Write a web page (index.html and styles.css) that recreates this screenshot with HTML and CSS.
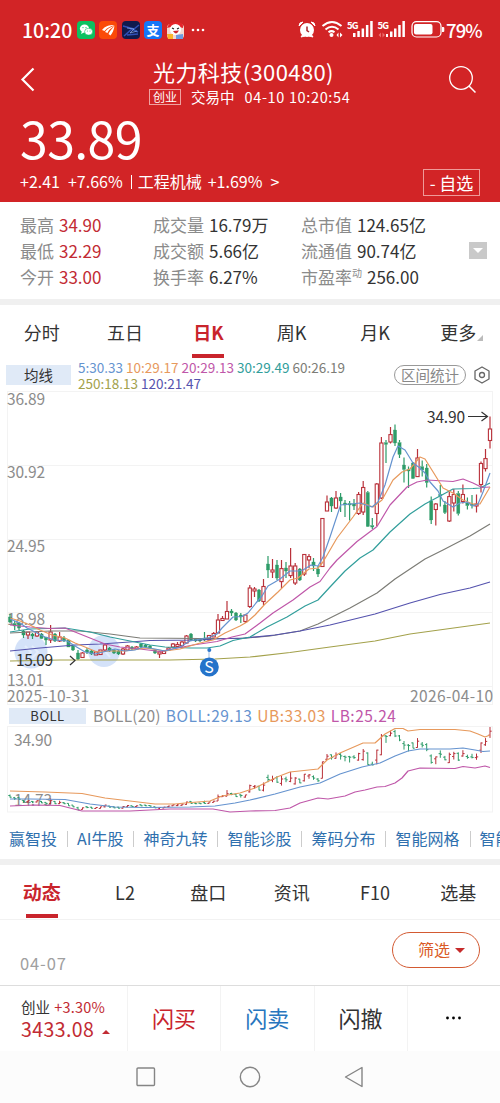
FILE: index.html
```html
<!DOCTYPE html>
<html lang="zh-CN">
<head>
    <meta charset="UTF-8">
    <meta name="viewport" content="width=device-width, initial-scale=1.0">
    <title>光力科技(300480)</title>
    <link rel="stylesheet" href="styles.css">
</head>
<body>
    <header class="header">
        <div class="status">
            <span class="clock">10:20</span>
            <svg class="apps" width="130" height="20" viewBox="0 0 130 20">
                <rect x="0" y="1" width="18" height="18" rx="4" fill="#0cc160"/>
                <ellipse cx="7.5" cy="8.5" rx="4.6" ry="3.9" fill="#fff"/>
                <path d="M4 14l1-3 3 1z" fill="#fff"/>
                <ellipse cx="11.6" cy="11.7" rx="4" ry="3.4" fill="#fff" stroke="#0cc160" stroke-width=".6"/>
                <g fill="#0cc160"><circle cx="6" cy="7.6" r=".6"/><circle cx="9" cy="7.6" r=".6"/><circle cx="10.3" cy="11" r=".5"/><circle cx="13" cy="11" r=".5"/></g>
                <rect x="22" y="1" width="18" height="18" rx="4" fill="#fb4a08"/>
                <path d="M25 10C28 6 32 5 37.500 5C34 6.500 30 7.500 27.500 11zM28 12C30 8.500 34 7 37.500 5.500C35 8 32 9 30.500 13zM31.500 14C32.500 11 35 9 37.500 6C37 9.500 35.500 13 33.500 15.500z" fill="#fff"/>
                <rect x="45" y="1" width="18" height="18" rx="4" fill="#101a4c"/>
                <path d="M46 6l11 3 5-4M47 16l8-7 6 3M50 15l11-1" stroke="#2f50b8" stroke-width="1.500" fill="none"/>
                <path d="M50 8l7 1-4 4 7-2" stroke="#8fb0f5" stroke-width=".7" fill="none"/>
                <rect x="67" y="1" width="18" height="18" rx="4" fill="#1677f8"/>
                <text x="69.500" y="14.800" font-size="13" font-weight="700" fill="#fff">支</text>
                <rect x="90" y="4" width="17" height="15" rx="4" fill="#f3d8d0"/>
                <path d="M90 8Q92 1 100 2Q107 2 106 8L98 6z" fill="#e5242a"/>
                <circle cx="98.500" cy="9.500" r="5.500" fill="#fff"/>
                <path d="M95 8l2 1M100 9l2-1" stroke="#222" stroke-width="1.200"/>
                <path d="M96 11q3 5 6-.5z" fill="#cf252b"/>
                <path d="M90 14h6v5h-5z" fill="#f9b52b"/><path d="M99 15l7-1v5h-7z" fill="#6e9be0"/>
                <g fill="#fff"><circle cx="116" cy="10" r="1.300"/><circle cx="121" cy="10" r="1.300"/><circle cx="126" cy="10" r="1.300"/></g>
            </svg>
            <svg class="signals" width="150" height="20" viewBox="298 20 150 20">
                <g fill="#fff">
                    <circle cx="307" cy="30" r="7"/>
                    <path d="M299 26q0-4 4-4zM315 26q0-4-4-4zM301 37l2-3 2 2zM313 37l-2-3-2 2z" stroke="#fff"/>
                    <circle cx="331.500" cy="35" r="2"/>
                </g>
                <path d="M307 26.500v4l2 1.500" stroke="#a9232a" stroke-width="1.500" fill="none"/>
                <path d="M322.500 26q9.500-8 19 0M325.500 29.500q6.500-5.500 13 0M328.500 32.300q3-2.300 6 0" stroke="#fff" stroke-width="2" fill="none"/>
                <path d="M338.500 32.500l-2 2.500 2 2.500zM340 32.500l2.500 2.500-2.500 2.500z" fill="#fff"/>
                <g fill="#fff">
                    <text x="347" y="29" font-size="9.500" font-weight="700" textLength="11.500">5G</text>
                    <path d="M353 33h2.500v4H353zM357.300 31h2.500v6h-2.500zM361.600 28.500h2.500V37h-2.500zM365.900 25h2.500v12h-2.500zM370.200 21h2.500v16h-2.500z"/>
                    <text x="377.500" y="29" font-size="9.500" font-weight="700" textLength="11.500">5G</text>
                    <path d="M386 34h2v3h-2zM390 31.500h2.500V37H390zM394 28.500h2.500V37H394zM398.200 25h2.500v12h-2.500zM402.400 21h2.500v16h-2.500z"/>
                    <path d="M381 32.500l-2.500 2.500 2.500 2.500zM382.500 32.500l2.500 2.500-2.500 2.500z" fill="#ec6c6b"/>
                    <rect x="414" y="24" width="18.500" height="10.500" rx="2"/>
                    <path d="M442 27h1.300q1 0 1 1v3q0 1-1 1H442z"/>
                </g>
                <rect x="412" y="21.700" width="29" height="15.300" rx="4.500" fill="none" stroke="#fff" stroke-width="1.200"/>
            </svg>
            <span class="percent">79%</span>
        </div>
        <div class="title-row">
            <svg class="back" width="20" height="28" viewBox="0 0 20 28"><path d="M15.500 2.500L4.500 13.500l11 11" fill="none" stroke="#fff" stroke-width="2.200"/></svg>
            <div class="title">
                <h1>光力科技<span>(300480)</span></h1>
                <p><span class="board">创业</span><span>交易中</span><span class="time">04-10 10:20:54</span></p>
            </div>
            <svg class="search" width="30" height="30" viewBox="0 0 30 30"><circle cx="13" cy="13" r="11.300" fill="none" stroke="#fff" stroke-width="1.300"/><path d="M21 21l6.500 6.500" stroke="#fff" stroke-width="1.500"/></svg>
        </div>
        <div class="price">33.89</div>
        <div class="change-row">
            <span class="delta">+2.41</span><span class="delta-pct">+7.66%</span><i></i><span>工程机械</span><span class="sector-pct">+1.69%</span><span>&gt;</span>
            <span class="watch">- 自选</span>
        </div>
    </header>

    <section class="stats">
        <dl>
            <div><dt>最高</dt><dd class="red">34.90</dd></div>
            <div><dt>最低</dt><dd class="red">32.29</dd></div>
            <div><dt>今开</dt><dd class="red">33.00</dd></div>
        </dl>
        <dl>
            <div><dt>成交量</dt><dd>16.79万</dd></div>
            <div><dt>成交额</dt><dd>5.66亿</dd></div>
            <div><dt>换手率</dt><dd>6.27%</dd></div>
        </dl>
        <dl>
            <div><dt>总市值</dt><dd>124.65亿</dd></div>
            <div><dt>流通值</dt><dd>90.74亿</dd></div>
            <div><dt>市盈率<sup>动</sup></dt><dd>256.00</dd></div>
        </dl>
        <span class="expand"></span>
    </section>

    <nav class="tabs">
        <span>分时</span><span>五日</span><span class="active">日K</span><span>周K</span><span>月K</span><span class="more">更多</span>
    </nav>

    <div class="ma-row">
        <span class="tag">均线</span>
        <p class="ma-values">
            <span class="ma5">5:30.33</span> <span class="ma10">10:29.17</span> <span class="ma20">20:29.13</span> <span class="ma30">30:29.49</span> <span class="ma60">60:26.19</span><br>
            <span class="ma250">250:18.13</span> <span class="ma120">120:21.47</span>
        </p>
        <span class="range">区间统计</span>
        <svg class="gear" width="18" height="20" viewBox="0 0 18 20"><path d="M9 2l7 4v8l-7 4-7-4V6z" fill="none" stroke="#666" stroke-width="1.300" stroke-linejoin="round"/><circle cx="9" cy="10" r="2.500" fill="none" stroke="#666" stroke-width="1.300"/></svg>
    </div>

    <svg class="chart" width="500" height="314" viewBox="0 391 500 314">
        <path class="grid" d="M7 391.500H493M7 465.500H493M7 539.500H493M7 612.500H493M7 686.500H493M7 704.500H493M7.500 391V705M492.500 391V705"/>
        <g class="axis">
            <text x="7" y="404.500" textLength="38">36.89</text>
            <text x="7" y="478" textLength="38">30.92</text>
            <text x="7" y="551.500" textLength="38">24.95</text>
            <text x="7" y="625" textLength="38">18.98</text>
            <text x="7" y="686" textLength="37">13.01</text>
            <text x="7" y="702" textLength="82">2025-10-31</text>
            <text x="410" y="702" textLength="83">2026-04-10</text>
        </g>
        <circle cx="31" cy="652" r="16.500" class="bubble"/>
        <circle cx="104" cy="651" r="16" class="bubble"/>
        <path d="M25 646l6 6-6 6M32 646l6 6-6 6M98 643l12 14" class="bubble-mark"/>
        <g id="candles"></g>
        <g id="averages"></g>
        <g class="mark">
            <text x="427" y="422.500" textLength="38">34.90</text>
            <path d="M468 416.500h19M481.500 412l6 4.500-6 4.500"/>
            <text x="16" y="666" textLength="37">15.09</text>
            <path d="M70 656l5 4.500-5 4.500"/>
        </g>
        <path d="M209 650v9" stroke="#9bbbe5"/>
        <circle cx="209.300" cy="650" r="2" fill="#2e78cb"/>
        <circle cx="209.300" cy="667" r="9.500" fill="#2473ca"/>
        <text x="204.300" y="672.800" font-size="16" fill="#fff">S</text>
    </svg>

    <div class="boll-row">
        <span class="tag">BOLL</span>
        <span class="boll-name">BOLL(20)</span><span class="ma5 boll-mid">BOLL:29.13</span><span class="ma10 boll-ub">UB:33.03</span><span class="ma20 boll-lb">LB:25.24</span>
    </div>
    <svg class="chart" width="500" height="88" viewBox="0 726 500 88">
        <path class="grid" d="M7 726.500H493M7 812H493M7.500 726V812M492.500 726V812"/>
        <g class="axis">
            <text x="14" y="745.500" textLength="38">34.90</text>
            <text x="14" y="805.500" textLength="38">14.73</text>
        </g>
        <g id="bars"></g>
        <g id="bands"></g>
    </svg>

    <div class="links">
        <a>赢智投</a><a>AI牛股</a><a>神奇九转</a><a>智能诊股</a><a>筹码分布</a><a>智能网格</a><a>智能交易</a>
    </div>

    <nav class="tabs tabs-news">
        <span class="active">动态</span><span>L2</span><span>盘口</span><span>资讯</span><span>F10</span><span>选基</span>
    </nav>
    <div class="feed">
        <span class="date">04-07</span>
        <span class="filter">筛选<i></i></span>
    </div>

    <footer class="trade">
        <div class="index">
            <p>创业 <span>+3.30%</span></p>
            <b>3433.08<i></i></b>
        </div>
        <span class="buy">闪买</span><span class="sell">闪卖</span><span>闪撤</span>
        <span><svg width="18" height="4" viewBox="0 0 18 4"><circle cx="2.500" cy="2" r="1.400"/><circle cx="8.500" cy="2" r="1.400"/><circle cx="14.500" cy="2" r="1.400"/></svg></span>
    </footer>
    <div class="system">
        <svg width="22" height="22" viewBox="0 0 22 22"><rect x="2" y="2" width="17.500" height="17.500" rx="1"/></svg>
        <svg width="22" height="22" viewBox="0 0 22 22"><circle cx="11" cy="11" r="9.700"/></svg>
        <svg width="22" height="22" viewBox="0 0 22 22"><path d="M19 1.500v19L2.500 11z" stroke-linejoin="round"/></svg>
    </div>
    <script src="chart.js"></script>
</body>
</html>
```
FILE: styles.css
```css
* {
    box-sizing: border-box;
}
body {
    margin: 0;
    width: 500px;
    height: 1103px;
    overflow: hidden;
    background: #fff;
    color: #333;
    font-family: "Noto Sans CJK SC", sans-serif;
    font-size: 17px;
    line-height: 1.2;
}
h1, p, dl, dd {
    margin: 0;
    font-weight: 400;
}
svg {
    display: block;
    flex: none;
    overflow: visible;
}
i {
    display: inline-block;
}
.header {
    height: 202px;
    background: #d22426;
    color: #fff;
}
.status {
    display: flex;
    align-items: center;
    height: 60px;
    padding-left: 22px;
    font-weight: 500;
}
.clock {
    width: 55px;
    font-size: 19.5px;
}
.signals {
    margin-left: 91px;
}
.percent {
    margin-left: -2px;
    font-size: 18.5px;
    letter-spacing: -0.9px;
}
.title-row {
    display: flex;
    align-items: center;
    height: 50px;
    padding: 0 22px 0 18px;
}
.back {
    margin-top: -11px;
}
.search {
    margin-top: -11px;
}
.title {
    flex: 1;
    padding-left: 1px;
    text-align: center;
}
.title h1 {
    margin-top: -5px;
    font-size: 22px;
    line-height: 28px;
    letter-spacing: 0.4px;
}
.title p {
    display: flex;
    align-items: center;
    gap: 10px;
    height: 24px;
    padding-left: 110px;
    font-size: 14.5px;
}
.board {
    padding: 0 3px;
    border: 1px solid #efa2a0;
    font-size: 12px;
    line-height: 14px;
}
.time {
    letter-spacing: 0.65px;
}
.price {
    height: 60px;
    padding: 1px 0 0 20px;
    font-size: 50px;
    line-height: 52px;
    letter-spacing: -0.6px;
}
.change-row {
    display: flex;
    align-items: center;
    height: 26px;
    margin-top: -1px;
    padding: 0 20px;
    font-size: 16px;
}
.delta-pct {
    margin-left: 8px;
}
.change-row i {
    width: 1px;
    height: 14px;
    margin: 0 6px 0 8px;
    background: #fff;
}
.sector-pct {
    margin: 0 8px 0 6px;
}
.watch {
    width: 57px;
    height: 27px;
    margin-left: auto;
    border: 1px solid #ef9a98;
    font-size: 17px;
    line-height: 26px;
    text-align: center;
}
.stats {
    display: flex;
    align-items: center;
    height: 97px;
    padding-left: 20px;
}
.stats dl {
    width: 133px;
}
.stats dl + dl {
    width: 148px;
}
.stats dl:nth-child(3) {
    width: 168px;
}
.stats dl div {
    display: flex;
    height: 26px;
    line-height: 26px;
}
dt {
    margin-right: 5px;
    color: #8b8b8b;
}
sup {
    font-size: 10px;
    line-height: 0;
}
.red {
    color: #c22b33;
}
.expand {
    display: flex;
    width: 18px;
    height: 17px;
    background: #c9c9c9;
    justify-content: center;
    align-items: center;
}
.expand::after {
    content: "";
    border: 5px solid transparent;
    border-top-color: #fff;
    border-bottom: 0;
}
.tabs {
    display: flex;
    height: 61px;
    border-top: 6px solid #f0f0f0;
    font-size: 18px;
}
.tabs span {
    display: flex;
    flex: 1;
    flex-direction: column;
    align-items: center;
    line-height: 54px;
}
.tabs .active {
    color: #c9242c;
    font-weight: 700;
}
.tabs .active::after {
    content: "";
    width: 32px;
    height: 4px;
    margin-top: -5px;
    background: #c9242c;
}
.tabs-news .active {
    font-size: 19px;
}
.more {
    position: relative;
}
.more::after {
    content: "";
    position: absolute;
    right: 17px;
    top: 30px;
    border: 3px solid #bbb;
    border-top-color: transparent;
    border-left-color: transparent;
}
.ma-row {
    display: flex;
    height: 37px;
    margin-top: -6px;
    padding: 6px 9px 0 6px;
}
.tag {
    width: 65px;
    height: 20px;
    background: #e0eaf7;
    font-size: 14.5px;
    line-height: 20px;
    text-align: center;
}
.ma-row .tag {
    margin-top: 5px;
}
.ma-values {
    width: 316px;
    margin-left: 7px;
    font-size: 13.5px;
    line-height: 15.5px;
    white-space: nowrap;
}
.ma5 { color: #6593cf; }
.ma10 { color: #e7995c; }
.ma20 { color: #bf57a9; }
.ma30 { color: #319e9b; }
.ma60 { color: #7c7c76; }
.ma250 { color: #a3a14b; }
.ma120 { color: #5553ae; }
.range {
    width: 72px;
    height: 20px;
    margin: 5px 7px 0 0;
    border: 1px solid #999;
    border-radius: 10px;
    color: #888;
    font-size: 14.5px;
    line-height: 18px;
    text-align: center;
}
.gear {
    margin-top: 5px;
}
.grid {
    fill: none;
    stroke: #f3f3f3;
}
.axis {
    fill: #8c8c8c;
    font-size: 15.5px;
}
.mark {
    fill: #333;
    font-size: 15.5px;
}
.mark path {
    fill: none;
    stroke: #333;
    stroke-width: 1.2;
}
.bubble {
    fill: #c9dbf8;
    opacity: 0.8;
}
.bubble-mark {
    fill: none;
    stroke: #e4edfc;
    stroke-width: 2;
}
.line {
    fill: none;
    stroke-width: 1.2;
    stroke-linejoin: round;
}
.boll-row {
    display: flex;
    align-items: center;
    height: 21px;
    padding-left: 9px;
    font-size: 15.5px;
    letter-spacing: 0.5px;
}
.boll-row .tag {
    width: 77px;
    height: 16px;
    font-size: 13px;
    line-height: 16px;
}
.boll-name {
    margin: 0 5px 0 7px;
    color: #8c8c8c;
    letter-spacing: 0.2px;
}
.boll-mid, .boll-ub {
    margin-right: 5px;
}
.links {
    display: flex;
    align-items: center;
    height: 45px;
    padding-left: 9px;
    padding-top: 5px;
    overflow: hidden;
    color: #2f70ae;
    font-size: 16px;
}
.links a {
    white-space: nowrap;
}
.links a + a::before {
    content: "";
    display: inline-block;
    width: 1px;
    height: 16px;
    margin: 0 9px 0 10px;
    background: #ccc;
    vertical-align: -2px;
}
.tabs-news {
    border-bottom: 1px solid #f2f2f2;
}
.feed {
    display: flex;
    justify-content: space-between;
    height: 65px;
    padding: 12px 20px 0;
}
.date {
    padding-top: 22px;
    color: #a0a0a0;
    font-size: 16.5px;
    letter-spacing: 0.9px;
}
.filter {
    width: 88px;
    height: 36px;
    padding-left: 25px;
    border: 1px solid #d35a32;
    border-radius: 18px;
    color: #da5a26;
    font-size: 16px;
    line-height: 33px;
}
.filter i {
    margin-left: 5px;
    border: 5px solid transparent;
    border-top-color: #c62b2b;
    border-bottom: 0;
    vertical-align: 3px;
}
.trade {
    display: flex;
    height: 66px;
    border-top: 1px solid #ddd;
    font-size: 22px;
}
.trade > span {
    display: flex;
    flex: 1;
    justify-content: center;
    align-items: center;
    padding-bottom: 2px;
    border-left: 1px solid #f3f3f3;
}
.trade > .buy {
    color: #c9252d;
}
.trade > .sell {
    color: #2876be;
}
.index {
    width: 127px;
    padding: 12px 0 0 21px;
    color: #c22b33;
    font-size: 14.5px;
}
.index p {
    height: 19px;
    color: #333;
}
.index p span {
    margin-left: 1px;
    color: #c22b33;
    letter-spacing: 0.2px;
}
.index b {
    display: block;
    font-size: 19.5px;
    font-weight: 400;
    letter-spacing: 0.4px;
}
.index i {
    margin-left: 8px;
    border: 4px solid transparent;
    border-bottom-color: #c22b33;
    border-top: 0;
    vertical-align: 3px;
}
.system {
    display: flex;
    justify-content: center;
    gap: 82px;
    height: 52px;
    padding-top: 15px;
    background: #fcfcfc;
}
.system svg {
    fill: none;
    stroke: #858585;
    stroke-width: 1.4;
}
```
FILE: chart.js
```js
// x, body top, body bottom, high, low, up
const candles = [
    [10, 617, 622, 614, 623, 0], [14.7, 623.5, 626, 621, 630, 0], [19, 623, 628, 622, 630, 0], [23.5, 631, 635, 630, 638, 0],
    [28, 632, 635, 632, 639, 1], [32.5, 634, 636, 633, 639, 0], [37, 632, 636, 631, 637, 1], [41.5, 634, 638.5, 633, 639, 0],
    [46, 637, 640, 637, 645, 0], [50.6, 632, 640, 625, 643, 1], [55, 634, 641, 633, 642, 0], [59.6, 637, 641, 632, 642, 1],
    [64, 638, 641, 636, 642, 0], [68.5, 640, 647, 640, 647, 0], [73, 645, 650, 645, 651, 0], [78, 653, 659, 650, 660, 0],
    [82.5, 653, 657.5, 652, 658, 1], [87, 650, 652, 648, 654, 0], [91.5, 651, 654, 650, 655, 0], [96, 652, 655, 651, 655, 1],
    [100.5, 650, 654.5, 650, 655, 1], [105, 645, 650, 644, 652, 1], [109.5, 648, 651, 647, 652, 0], [114, 650, 653, 649, 654, 0],
    [118.5, 651, 654, 650, 655, 0], [123, 649, 654, 648, 655, 1], [127.5, 646, 650, 645, 651, 1], [132, 647, 649, 646, 650, 0],
    [136.5, 647, 649, 646, 650, 1], [141, 644, 647, 643, 648, 0], [145.5, 645, 647, 644, 648, 0], [150, 646, 648, 645, 649, 0],
    [155, 650, 653, 649, 654, 0], [159.5, 652, 654, 651, 658, 1], [164, 651, 653.5, 650, 654, 1], [168.5, 648, 650, 647, 651, 1],
    [173, 644, 647, 643, 648, 1], [177.5, 644.5, 646.5, 642, 648, 1], [182, 642, 645.5, 641, 647, 1], [186.5, 636, 643, 635, 644, 1],
    [191, 634, 640, 633, 641, 0], [195.5, 639, 641, 638, 642, 0], [200, 639, 641, 638, 642, 0], [204.5, 638, 640, 632, 641, 0],
    [209, 635.5, 640, 635, 641, 1], [213.7, 633.5, 637, 632, 637, 1], [218, 620, 633, 614, 633, 1], [222.5, 618.5, 620.5, 616, 621, 1],
    [227, 611.5, 619, 601, 619, 1], [231.5, 611, 613, 609, 616, 0], [236, 613, 620, 612, 621, 0], [240.8, 615, 617, 613, 623, 0],
    [245.4, 615, 621.5, 615, 623, 1], [249.8, 588, 606.5, 585, 608, 1], [254.5, 589, 591, 587, 597, 1], [259, 590, 601, 589, 602, 0],
    [263.5, 586.5, 601.5, 579, 605, 1], [268, 564, 570, 556, 578, 0], [272.5, 570, 572, 559, 578, 1], [277, 565, 578, 560, 580, 0],
    [281.5, 568.6, 581.6, 560, 588, 1], [286, 568, 571, 562, 578, 0], [290.6, 566, 575.6, 548, 578, 1], [295.2, 566, 583, 563, 585, 1],
    [299.8, 569, 580, 568, 581, 0], [304.3, 554.5, 574, 554, 576, 1], [309, 556.6, 560, 554, 568, 1], [313.5, 562, 566, 558, 571, 0],
    [318, 569, 574, 566, 577, 0], [322.4, 518.5, 566.5, 518, 567, 1], [327, 502, 511, 495.5, 511, 1], [331.5, 498, 506, 497, 512, 0],
    [336, 498, 508, 491, 509, 1], [340.6, 497, 501, 493, 512, 0], [345, 503, 505, 500, 517, 0], [349.6, 503.5, 505, 501, 520.5, 0],
    [354, 504, 506, 499, 510, 0], [358.6, 494.5, 513.5, 492, 515, 1], [363.2, 487.5, 512, 481, 515, 1], [367.8, 492.5, 526.5, 491, 527, 0],
    [372.3, 525.5, 527, 518, 529, 0], [376.8, 484, 513.5, 483, 526, 1], [381.4, 443, 498, 437, 499, 1], [386, 442.6, 444.5, 440, 463, 0],
    [390.5, 434.6, 442, 427, 443.5, 1], [395, 430, 443, 424.6, 446, 0], [399.5, 442.6, 454.5, 440, 458, 0], [404, 465, 469.5, 457.6, 482.6, 0],
    [408.5, 469.5, 471, 466.6, 488, 0], [413, 463, 478.5, 462, 479, 0], [417.5, 458, 476.6, 449, 477, 1], [422.2, 466.6, 470, 460.6, 476.6, 0],
    [426.7, 468, 482.6, 464, 487.5, 0], [431.2, 501, 520, 496.6, 524, 0], [435.8, 504, 509.5, 503, 525.5, 1], [440.3, 494.6, 496, 485, 506.6, 0],
    [444.9, 505, 512.6, 501, 514, 0], [449.3, 496.6, 521, 491.6, 522, 1], [453.8, 494.5, 503, 489, 511.6, 1], [458.3, 493.5, 513.5, 491, 515.6, 0],
    [462.9, 494.5, 501.5, 484.5, 503.5, 1], [467.4, 503, 505.6, 497.5, 509.5, 0], [472, 504, 505.6, 495, 508.5, 0], [476.5, 504, 506, 494.5, 512.6, 1],
    [481, 463.5, 484.5, 461.6, 492.6, 1], [485.5, 458.6, 468.6, 449, 471.6, 1], [490, 429, 440.5, 416.6, 448.5, 1]
];

const averages = {
    '#7c7c76': '10,633 50,631 80,631 110,634 140,638 200,638.5 240,638.5 270,636 300,631 318,624 330,618 350,608 377,593 395,579 425,559 443,550 470,536 490,524',
    '#5553ae': '10,651 40,648 75,645 100,644 130,642 150,640.5 200,640 215,639 245,638 275,635 300,631 330,625 375,614 410,603 440,594.5 470,588 490,582',
    '#a3a14b': '10,661 60,660 170,660 215,659 250,657 290,652.5 330,647 375,641 410,634 450,628.5 490,623',
    '#319e9b': '10,632 30,629 65,628 90,632 110,637 130,641 150,645 165,647 190,648 207,648 220,646 233,640.5 250,637 267,627 287,617 305,606 318,600 330,587 345,571 360,558 373,550 390,532 410,514 425,504 440,496 453,489 473,488.5 480,488 490,483',
    '#bf57a9': '10,625 30,627 50,628.5 65,628 75,632 90,638 105,644 120,647 140,649 160,651.5 193,645 217,641.5 232,637 245,634 260,623 273,613 293,600 310,587 320,581.5 330,568 337,560 357,541.5 377,526.5 390,505 407,487 417,482 427,480 453,481.5 463,479 473,483 482,487.5 490,487',
    '#e7995c': '10,618 20,621 30,625 40,630 52,635 65,638 75,643 85,647 97,652 110,651 125,651 145,648 165,651 180,649 200,643 213,640 225,633 240,626 247,622 255,615 265,604 278,592 290,580 298,578 309,569 318,568 323,562 330,550 337,538 353,517 363,503 373,507 382,500 393,480 402,472 410,469 420,457 425,459 435,475 443,488 453,493 463,500 473,504 480,504 490,487',
    '#6593cf': '10,619 20,623 27,628 35,632 45,637 55,640 67,641 75,646 85,652 95,654 103,652 115,649 125,651 135,650 143,647 155,649 165,651 180,647 190,641 209,637.5 217,634 222,628 228,622 233,617 242,616.5 248,613 256,603 262,596 268,586 275,582 280,579 290,571 298,571 303,570 311,565 318,566 323,557 330,537 340.6,505 360,503 372,507 378,502 385,485 393,457 398,446 405,450 413,463 420,468 425,473 430,482 438,491 443,501 453,507 460,503 467,502 473,506 478,504 483,492 490,473'
};

const bands = {
    '#e7995c': '10,791 45,792 82,793.5 105,798 130,801 155,804 175,804 185,803 210,801 222,796 240,793 255,788 277,777 290,772 318,769 327,760 340,753 363,743 375,743 385,734 395,728.5 403,728.5 408,731 420,729.5 455,729.5 470,731 478,734 485,737 490,735',
    '#6593cf': '10,799 30,799 65,799.5 90,804 115,807 145,807.5 190,807 215,806 235,803 250,800 275,794 300,787 320,783 340,774 362,767 380,763 395,756 408,751 420,749 450,749 463,748 475,750 483,751.5 490,751',
    '#bf57a9': '10,806 35,805 60,805.5 70,808 82,811 130,811 170,809 213,809 230,812 250,811 275,810.5 290,808 300,803 318,798 328,799 345,796 355,792 365,790 377,787 385,786.5 395,783 402,778 408,771 420,768 455,768.5 463,766.5 475,768 485,766 490,767.5'
};

function drawLines(id, lines) {
    let html = '';
    for (const color in lines) {
        html += `<polyline class="line" stroke="${color}" points="${lines[color]}"/>`;
    }
    document.getElementById(id).innerHTML = html;
}

function drawCandles() {
    let html = '';
    candles.forEach(([x, top, bottom, high, low, up]) => {
        const color = up ? '#b9313a' : '#2e9c69';
        html += `<path d="M${x} ${high}V${top}M${x} ${bottom}V${low}" stroke="${color}" stroke-width="1.2"/>`;
        html += `<rect x="${x - 1.6}" y="${top}" width="3.2" height="${bottom - top}" fill="${up ? '#fff' : color}" stroke="${color}" stroke-width="${up ? 1.1 : 0.3}"/>`;
    });
    document.getElementById('candles').innerHTML = html;
}

// same prices squeezed into the BOLL panel
function drawBars() {
    const scale = y => (727 + (y - 416.6) * 0.342).toFixed(1);
    let html = '';
    candles.forEach(([x, top, bottom, high, low, up]) => {
        const open = scale(up ? bottom : top);
        const close = scale(up ? top : bottom);
        html += `<path d="M${x} ${scale(high)}V${scale(low)}M${x - 1.7} ${open}H${x}M${x} ${close}h1.7" stroke="${up ? '#b9313a' : '#2e9c69'}" fill="none"/>`;
    });
    document.getElementById('bars').innerHTML = html;
}

drawCandles();
drawLines('averages', averages);
drawBars();
drawLines('bands', bands);
```
